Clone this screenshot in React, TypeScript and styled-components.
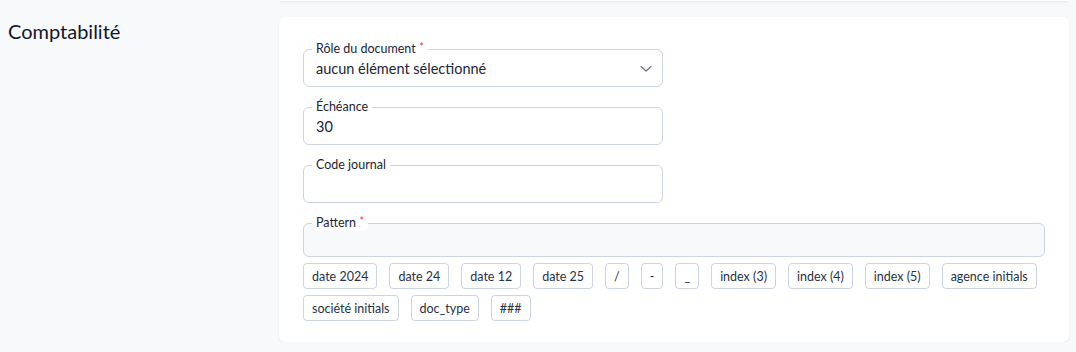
import React from "react";
import styled, { createGlobalStyle } from "styled-components";

const GlobalStyle = createGlobalStyle`
  html, body {
    margin: 0;
    background: #f8f9fb;
    font-family: "Lato", "Noto Sans", sans-serif;
    color: #1e2433;
  }
`;

const tokens = [
  "date 2024",
  "date 24",
  "date 12",
  "date 25",
  "/",
  "-",
  "_",
  "index (3)",
  "index (4)",
  "index (5)",
  "agence initials",
  "société initials",
  "doc_type",
  "###",
];

export default function App() {
  return (
    <>
      <GlobalStyle />
      <Page>
        <PrevCard />
        <Section>
          <Title>Comptabilité</Title>
          <Card>
            <Field>
              <Label>
                Rôle du document <Required>*</Required>
              </Label>
              <Value>aucun élément sélectionné</Value>
              <svg width="12" height="8" viewBox="0 0 12 8" fill="none">
                <path
                  d="M1 1.5L6 6L11 1.5"
                  stroke="#6b7280"
                  strokeWidth="1.2"
                  strokeLinecap="round"
                  strokeLinejoin="round"
                />
              </svg>
            </Field>
            <Field>
              <Label>Échéance</Label>
              <Value>30</Value>
            </Field>
            <Field>
              <Label>Code journal</Label>
              <Value />
            </Field>
            <Field $wide $muted>
              <Label>
                Pattern <Required>*</Required>
              </Label>
              <Value />
            </Field>
            <Chips>
              {tokens.map((t) => (
                <Chip key={t}>{t}</Chip>
              ))}
            </Chips>
          </Card>
        </Section>
      </Page>
    </>
  );
}

const Page = styled.div`
  padding: 0 7px 0 8px;
`;

const PrevCard = styled.div`
  margin-left: 271px;
  height: 1px;
  background: #ffffff;
  border-radius: 0 0 6px 6px;
  box-shadow: 0 1px 2px rgba(30, 40, 60, 0.12);
`;

const Section = styled.div`
  display: grid;
  grid-template-columns: 271px 1fr;
  margin-top: 16px;
`;

const Title = styled.h2`
  margin: 0;
  font-size: 20px;
  font-weight: 400;
  line-height: 28px;
  color: #111827;
`;

const Card = styled.div`
  background: #ffffff;
  border-radius: 6px;
  box-shadow: 0 1px 2px rgba(30, 40, 60, 0.1);
  padding: 32px 24px 21px 24px;
  display: flex;
  flex-direction: column;
  gap: 20px;
`;

const Field = styled.div<{ $wide?: boolean; $muted?: boolean }>`
  position: relative;
  box-sizing: border-box;
  width: ${(p) => (p.$wide ? "100%" : "360px")};
  height: ${(p) => (p.$wide ? "34px" : "38px")};
  padding: 2px 10px 0 12px;
  display: flex;
  align-items: center;
  justify-content: space-between;
  border: 1px solid #cdd3e0;
  border-radius: 6px;
  background: ${(p) => (p.$muted ? "#f8f9fb" : "#ffffff")};
`;

const Label = styled.span`
  position: absolute;
  top: -9px;
  left: 8px;
  padding: 0 4px;
  font-size: 12.5px;
  line-height: 16px;
  color: #1e2433;
  background: #ffffff;
  border-radius: 6px;
  white-space: nowrap;
`;

const Required = styled.span`
  color: #ef4444;
  font-size: 12px;
  line-height: 0;
  position: relative;
  top: -2px;
`;

const Value = styled.div`
  font-size: 14.5px;
  line-height: 20px;
  color: #1e2433;
`;

const Chips = styled.div`
  display: flex;
  flex-wrap: wrap;
  gap: 6px 12px;
  margin-top: -14px;
`;

const Chip = styled.button`
  height: 26px;
  padding: 0 8px;
  font-family: inherit;
  font-size: 12.5px;
  color: #2a3142;
  background: #ffffff;
  border: 1px solid #cdd3e0;
  border-radius: 4px;
`;
